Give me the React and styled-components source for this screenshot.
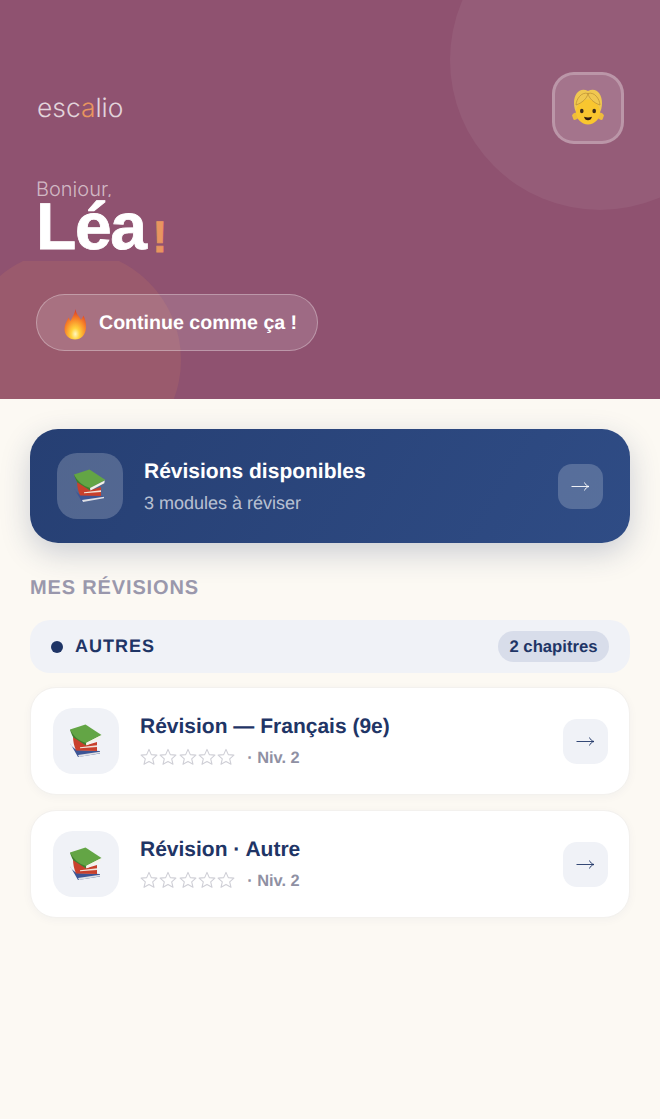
import styled, { createGlobalStyle } from "styled-components";

const NAVY = "#1f3566";
const PALE = "#f0f2f7";

const GlobalStyle = createGlobalStyle`
  html, body {
    margin: 0;
    padding: 0;
    background: #fcf9f3;
    font-family: "Liberation Sans", Arial, sans-serif;
    text-rendering: geometricPrecision;
  }
  * {
    box-sizing: border-box;
  }
`;

const Page = styled.div`
  min-height: 1119px;
  display: flex;
  flex-direction: column;
  overflow: hidden;
  background: #fcf9f3;
`;

const Hero = styled.header`
  position: relative;
  height: 399px;
  padding: 72px 36px 0;
  overflow: hidden;
  background: #8f5270;
`;

const GlowTop = styled.div`
  position: absolute;
  top: -90px;
  right: -90px;
  width: 300px;
  height: 300px;
  border-radius: 50%;
  background: rgba(255, 255, 255, 0.06);
`;

const GlowBottom = styled.div`
  position: absolute;
  left: -39px;
  top: 250px;
  width: 220px;
  height: 220px;
  border-radius: 50%;
  background: rgba(232, 149, 90, 0.13);
  clip-path: inset(11px 0 0 0);
`;

const HeroRow = styled.div`
  position: relative;
  display: flex;
  align-items: center;
  justify-content: space-between;
`;

const Logo = styled.div`
  margin: -1px 0 0 1px;
  font-family: Inter, "Liberation Sans", sans-serif;
  font-size: 26.4px;
  font-weight: 300;
  color: rgba(255, 255, 255, 0.75);
  span {
    color: #e8955f;
  }
`;

const Avatar = styled.div`
  width: 72px;
  height: 72px;
  display: flex;
  align-items: center;
  justify-content: center;
  border-radius: 22px;
  border: 3px solid rgba(255, 255, 255, 0.25);
  background: rgba(255, 255, 255, 0.15);
`;

const Greeting = styled.div`
  position: relative;
  margin-top: 35px;
  height: 18px;
  overflow: hidden;
  font-family: Inter, "Liberation Sans", sans-serif;
  font-size: 20px;
  font-weight: 300;
  line-height: 20px;
  color: rgba(255, 255, 255, 0.6);
`;

const Name = styled.h1`
  position: relative;
  display: flex;
  align-items: baseline;
  margin: 0;
  height: 97px;
  font-size: 66px;
  font-weight: 700;
  line-height: 58px;
  letter-spacing: -1.4px;
  color: #fff;
  -webkit-text-stroke: 0.8px currentColor;
  span {
    margin-left: 7px;
    font-size: 44px;
    letter-spacing: 0;
    color: #e8955f;
    transform: translateY(3px);
  }
`;

const Pill = styled.div`
  position: relative;
  display: inline-flex;
  align-items: center;
  gap: 4px;
  height: 57px;
  width: 282px;
  padding: 1px 0 0 18px;
  border-radius: 29px;
  border: 1.5px solid rgba(255, 255, 255, 0.3);
  background: rgba(255, 255, 255, 0.14);
  font-size: 19.6px;
  font-weight: 700;
  color: #fff;
`;

const Content = styled.main`
  display: flex;
  flex-direction: column;
  padding: 30px 30px 0;
`;

const Banner = styled.div`
  display: flex;
  align-items: center;
  height: 114px;
  padding: 0 27px;
  border-radius: 28px;
  background: linear-gradient(120deg, #263f73, #2f4c85);
  box-shadow: 0 10px 30px rgba(31, 53, 102, 0.22);
`;

const BookTile = styled.div`
  flex: none;
  width: 66px;
  height: 66px;
  display: flex;
  align-items: center;
  justify-content: center;
  border-radius: 20px;
  background: ${({ $onDark }) => ($onDark ? "rgba(255, 255, 255, 0.2)" : PALE)};
`;

const BannerText = styled.div`
  flex: 1;
  margin-left: 21px;
`;

const BannerTitle = styled.div`
  margin-top: 1px;
  font-size: 21px;
  font-weight: 700;
  line-height: 24px;
  color: #fff;
`;

const BannerSub = styled.div`
  margin-top: 8px;
  font-size: 18px;
  line-height: 22px;
  color: rgba(255, 255, 255, 0.68);
`;

const ArrowTile = styled.div`
  flex: none;
  width: 45px;
  height: 45px;
  display: flex;
  align-items: center;
  justify-content: center;
  border-radius: 14px;
  background: ${({ $onDark }) => ($onDark ? "rgba(255, 255, 255, 0.2)" : PALE)};
  color: ${({ $onDark }) => ($onDark ? "#fff" : NAVY)};
`;

const SectionLabel = styled.h2`
  margin: 33px 0 20px;
  font-size: 20px;
  font-weight: 700;
  line-height: 24px;
  letter-spacing: 0.85px;
  color: #9a98ac;
`;

const GroupHeader = styled.div`
  display: flex;
  align-items: center;
  height: 53px;
  padding: 0 21px;
  border-radius: 20px;
  background: ${PALE};
`;

const Dot = styled.div`
  width: 12px;
  height: 12px;
  border-radius: 50%;
  background: ${NAVY};
`;

const GroupName = styled.div`
  flex: 1;
  margin-left: 12px;
  font-size: 18px;
  font-weight: 700;
  letter-spacing: 1px;
  color: ${NAVY};
`;

const Badge = styled.div`
  height: 31px;
  width: 111px;
  display: flex;
  align-items: center;
  justify-content: center;
  border-radius: 16px;
  background: #d8ddea;
  font-size: 16.7px;
  font-weight: 700;
  color: ${NAVY};
`;

const CardList = styled.div`
  display: flex;
  flex-direction: column;
  gap: 15px;
  margin-top: 14px;
`;

const Card = styled.div`
  display: flex;
  align-items: center;
  height: 108px;
  padding: 0 21px 0 22px;
  border-radius: 26px;
  background: #fff;
  border: 1px solid #f3f1ee;
  box-shadow: 0 2px 10px rgba(31, 53, 102, 0.04);
`;

const CardText = styled.div`
  flex: 1;
  margin-left: 21px;
`;

const CardTitle = styled.div`
  margin-top: 1px;
  font-size: 21px;
  font-weight: 700;
  line-height: 26px;
  color: ${NAVY};
`;

const CardMeta = styled.div`
  display: flex;
  align-items: center;
  gap: 12px;
  margin-top: 5px;
  font-size: 16.4px;
  font-weight: 700;
  line-height: 22px;
  color: #8f90a3;
  span {
    padding-top: 2px;
  }
`;

const Stars = styled.div`
  display: flex;
  gap: 1.3px;
`;

const Arrow = () => (
  <svg width="19" height="13" viewBox="0 0 19 13" fill="none" stroke="currentColor" strokeWidth="0.9">
    <path d="M0.500 6.500h17.500" />
    <path d="M13.500 2.500c.8 2 2.200 3.400 4.500 4-2.300.6-3.700 2-4.500 4" />
  </svg>
);

const Star = () => (
  <svg width="18" height="18" viewBox="0 0 18 18" fill="none" stroke="#cfcfd6" strokeWidth="1.1" strokeLinejoin="round">
    <path d="M9 1.400l2.300 5.200 5.600.5-4.200 3.700 1.300 5.500L9 13.400l-5 2.900 1.300-5.500-4.200-3.700 5.600-.5z" />
  </svg>
);

const Books = () => (
  <svg width="42" height="42" viewBox="0 0 42 42">
    <path d="M5 23l8 14 22-3.500V31L12 30c-3-1.500-6-4-7-7z" fill="#3d5595" />
    <path d="M13 35l22-3.300v1.600L14 37z" fill="#dfe0e4" />
    <path d="M8 16l14 9 10-3v9l-21-.5C9 26 8 21 8 16z" fill="#c8402c" />
    <path d="M15 27.200l17-1.900v1.700l-17 1.300z" fill="#f1e4da" />
    <path d="M5 9.500c1 3.500 2 6 3.500 8L21 25.500l.5-3z" fill="#3f7f2e" />
    <path d="M5 9.500L20.500 4.500 36.500 15 21 23C14 21 8 16 5 9.500z" fill="#63a545" />
    <path d="M21 23l14.800-7.500-.5 2.800L21.500 25.500z" fill="#f5f2e8" />
  </svg>
);

const Flame = () => (
  <svg width="40" height="40" viewBox="0 0 40 40">
    <defs>
      <radialGradient id="flameFill" cx="50%" cy="82%" r="78%">
        <stop offset="0" stopColor="#fff7c0" />
        <stop offset="0.25" stopColor="#ffd23c" />
        <stop offset="0.6" stopColor="#f98a2a" />
        <stop offset="1" stopColor="#dc3a26" />
      </radialGradient>
    </defs>
    <path
      d="M20.500 6C21 11 24 13 26 17c1-2 2-3 2.500-4.500C30 16 31.500 20 31 25c-.5 7-5 11.500-11 11.500S9.500 32 9.500 26c0-5 2.500-8 4-11.500 1 1.500 1.500 2.500 2 3.500 2-4 4.500-8 5-12z"
      fill="url(#flameFill)"
    />
  </svg>
);

const Girl = () => (
  <svg width="46" height="46" viewBox="0 0 46 46">
    <path d="M13 28c-2-1-5 0-6 2.500 1 2 1 3.500 2 4.500 2 0 4-2 5.500-3z" fill="#eebc3c" />
    <path d="M33 28c2-1 5 0 6 2.500-1 2-1 3.500-2 4.500-2 0-4-2-5.500-3z" fill="#eebc3c" />
    <path d="M23 6C15 2 9 8.500 9 18c0 4 1 8 3 11h22c2-3 3-7 3-11 0-9.500-6-16-14-12z" fill="#f0c850" />
    <ellipse cx="23" cy="27" rx="12" ry="12.500" fill="#f9c62f" />
    <path d="M23 8.500c-1 5-6 9.500-12 11.500.3-6 5.500-13.500 12-11.500zM23 8.500c1 5 6 9.500 12 11.500-.3-6-5.500-13.500-12-11.500z" fill="#f0c850" stroke="#b98d33" strokeWidth="0.7" />
    <ellipse cx="16.800" cy="26" rx="1.800" ry="2.200" fill="#3a2a1a" />
    <ellipse cx="29.200" cy="26" rx="1.800" ry="2.200" fill="#3a2a1a" />
    <path d="M19 31.800c2.500.8 5.500.8 8 0-.6 2.400-2 3.500-4 3.500s-3.400-1.100-4-3.500z" fill="#2d1a10" />
  </svg>
);

const Rating = () => (
  <Stars>
    {[0, 1, 2, 3, 4].map((i) => (
      <Star key={i} />
    ))}
  </Stars>
);

const revisions = ["Révision — Français (9e)", "Révision · Autre"];

export default function App() {
  return (
    <Page>
      <GlobalStyle />
      <Hero>
        <GlowTop />
        <GlowBottom />
        <HeroRow>
          <Logo>
            esc<span>a</span>lio
          </Logo>
          <Avatar>
            <Girl />
          </Avatar>
        </HeroRow>
        <Greeting>Bonjour,</Greeting>
        <Name>
          Léa<span>!</span>
        </Name>
        <Pill>
          <Flame />
          Continue comme ça !
        </Pill>
      </Hero>

      <Content>
        <Banner>
          <BookTile $onDark>
            <Books />
          </BookTile>
          <BannerText>
            <BannerTitle>Révisions disponibles</BannerTitle>
            <BannerSub>3 modules à réviser</BannerSub>
          </BannerText>
          <ArrowTile $onDark>
            <Arrow />
          </ArrowTile>
        </Banner>

        <SectionLabel>MES RÉVISIONS</SectionLabel>

        <GroupHeader>
          <Dot />
          <GroupName>AUTRES</GroupName>
          <Badge>2 chapitres</Badge>
        </GroupHeader>

        <CardList>
          {revisions.map((title) => (
            <Card key={title}>
              <BookTile>
                <Books />
              </BookTile>
              <CardText>
                <CardTitle>{title}</CardTitle>
                <CardMeta>
                  <Rating />
                  <span>· Niv. 2</span>
                </CardMeta>
              </CardText>
              <ArrowTile>
                <Arrow />
              </ArrowTile>
            </Card>
          ))}
        </CardList>
      </Content>
    </Page>
  );
}
